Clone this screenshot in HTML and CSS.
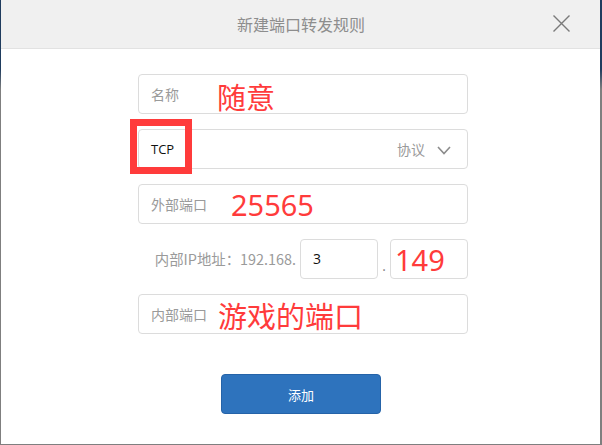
FILE: index.html
```html
<!DOCTYPE html>
<html lang="zh-CN">
<head>
<meta charset="utf-8">
<title>新建端口转发规则</title>
<link rel="stylesheet" href="styles.css">
</head>
<body>
<div class="dialog">
  <header class="dlg-head">
    <span class="dlg-spacer"></span>
    <h1 class="dlg-title">新建端口转发规则</h1>
    <button class="dlg-close" type="button" aria-label="关闭">
      <svg width="17" height="17" viewBox="0 0 17 17"><path d="M0.5 0.5 L16.5 16.5 M16.5 0.5 L0.5 16.5" stroke="#7a7a7a" stroke-width="1.4" fill="none"/></svg>
    </button>
  </header>
  <main class="dlg-body">
    <div class="form">
      <div class="field"><span class="label">名称</span><span class="note note-name">随意</span></div>
      <div class="field field-select">
        <span class="value">TCP</span>
        <span class="select-hint">协议</span>
        <svg class="chevron" width="14" height="9" viewBox="0 0 14 9"><path d="M1 1 L7 7.5 L13 1" stroke="#8c8c8c" stroke-width="1.6" fill="none"/></svg>
        <span class="highlight"></span>
      </div>
      <div class="field"><span class="label">外部端口</span><span class="note note-ext">25565</span></div>
      <div class="ip-row">
        <span class="ip-label">内部IP地址：192.168.</span>
        <div class="ip-box"><span class="value value-ip">3</span></div>
        <span class="ip-dot">.</span>
        <div class="ip-box ip-box-last"><span class="note">149</span></div>
      </div>
      <div class="field"><span class="label">内部端口</span><span class="note note-int">游戏的端口</span></div>
      <button class="btn-add" type="button">添加</button>
    </div>
  </main>
</div>
</body>
</html>
```

FILE: styles.css
```css
* { box-sizing: border-box; }
html, body { margin: 0; padding: 0; }
body {
  width: 602px;
  height: 445px;
  background: #ffffff;
  font-family: "Noto Sans CJK SC", "Noto Sans", sans-serif;
  overflow: hidden;
}
.dialog {
  width: 602px;
  height: 445px;
  border-left: 1px solid #7d7d7d;
  border-right: 2px solid #7d7d7d;
  border-bottom: 1px solid #7d7d7d;
  border-image: linear-gradient(to bottom, #1f3c5e 0, #1f3c5e 70px, #7f7f7f 90px, #7f7f7f 100%) 1;
  display: flex;
  flex-direction: column;
  background: #fff;
}
.dlg-head {
  height: 49px;
  flex: none;
  background: #f0f0f0;
  border-bottom: 1px solid #e2e2e2;
  display: grid;
  grid-template-columns: 1fr auto 1fr;
  align-items: center;
}
.dlg-title {
  margin: 0;
  font-size: 16px;
  font-weight: normal;
  color: #8d8d8d;
  line-height: 1;
  padding-left: 1px;
}
.dlg-close {
  justify-self: end;
  margin-right: 30px;
  margin-top: -2px;
  width: 17px;
  height: 17px;
  padding: 0;
  border: 0;
  background: transparent;
  display: flex;
}
.dlg-body {
  flex: 1;
  padding-top: 25px;
}
.form {
  width: 330px;
  margin-left: 137px;
  display: flex;
  flex-direction: column;
  gap: 15px;
}
.field {
  position: relative;
  height: 40px;
  border: 1px solid #dcdcdc;
  border-radius: 4px;
  display: flex;
  align-items: center;
  padding: 0 12px;
}
.label {
  font-size: 14px;
  color: #9a9a9a;
  line-height: 1;
}
.value {
  font-size: 13px;
  color: #111;
  line-height: 1;
  font-family: "Open Sans", "Noto Sans", sans-serif;
}
.value-ip { font-size: 14px; }
.note {
  font-size: 29px;
  color: #ff3b3b;
  line-height: 1;
}
.note-name { margin-left: 38px; margin-top: 4px; }
.note-ext { margin-left: 24px; font-family: "Noto Sans", sans-serif; margin-top: 1px; }
.note-int { margin-left: 11px; margin-top: 2px; }
.select-hint {
  margin-left: auto;
  font-size: 14px;
  color: #9a9a9a;
  line-height: 1;
}
.chevron {
  margin-left: 12px;
  margin-right: 4px;
  margin-top: 2px;
}
.highlight {
  position: absolute;
  left: -9px;
  top: -11px;
  width: 62px;
  height: 55px;
  border: 7px solid #ff3b3b;
}
.ip-row {
  height: 40px;
  display: flex;
  align-items: center;
  justify-content: flex-end;
}
.ip-label {
  font-size: 14.4px;
  color: #9a9a9a;
  margin-right: 4px;
  line-height: 1;
}
.ip-box {
  width: 78px;
  height: 40px;
  border: 1px solid #dcdcdc;
  border-radius: 4px;
  display: flex;
  align-items: center;
  padding: 0 12px;
}
.ip-box-last { padding: 0 4px; }
.ip-box-last .note { font-family: "Noto Sans", sans-serif; }
.ip-dot {
  width: 12px;
  text-align: center;
  font-size: 13px;
  color: #777;
  margin-top: 12px;
}
.btn-add {
  align-self: flex-start;
  margin-left: 83px;
  margin-top: 25px;
  width: 160px;
  height: 40px;
  background: #2e73bd;
  border: 1px solid #2563a8;
  border-radius: 4px;
  color: #fff;
  font-family: "Noto Sans CJK SC", sans-serif;
  font-size: 13px;
}
```
